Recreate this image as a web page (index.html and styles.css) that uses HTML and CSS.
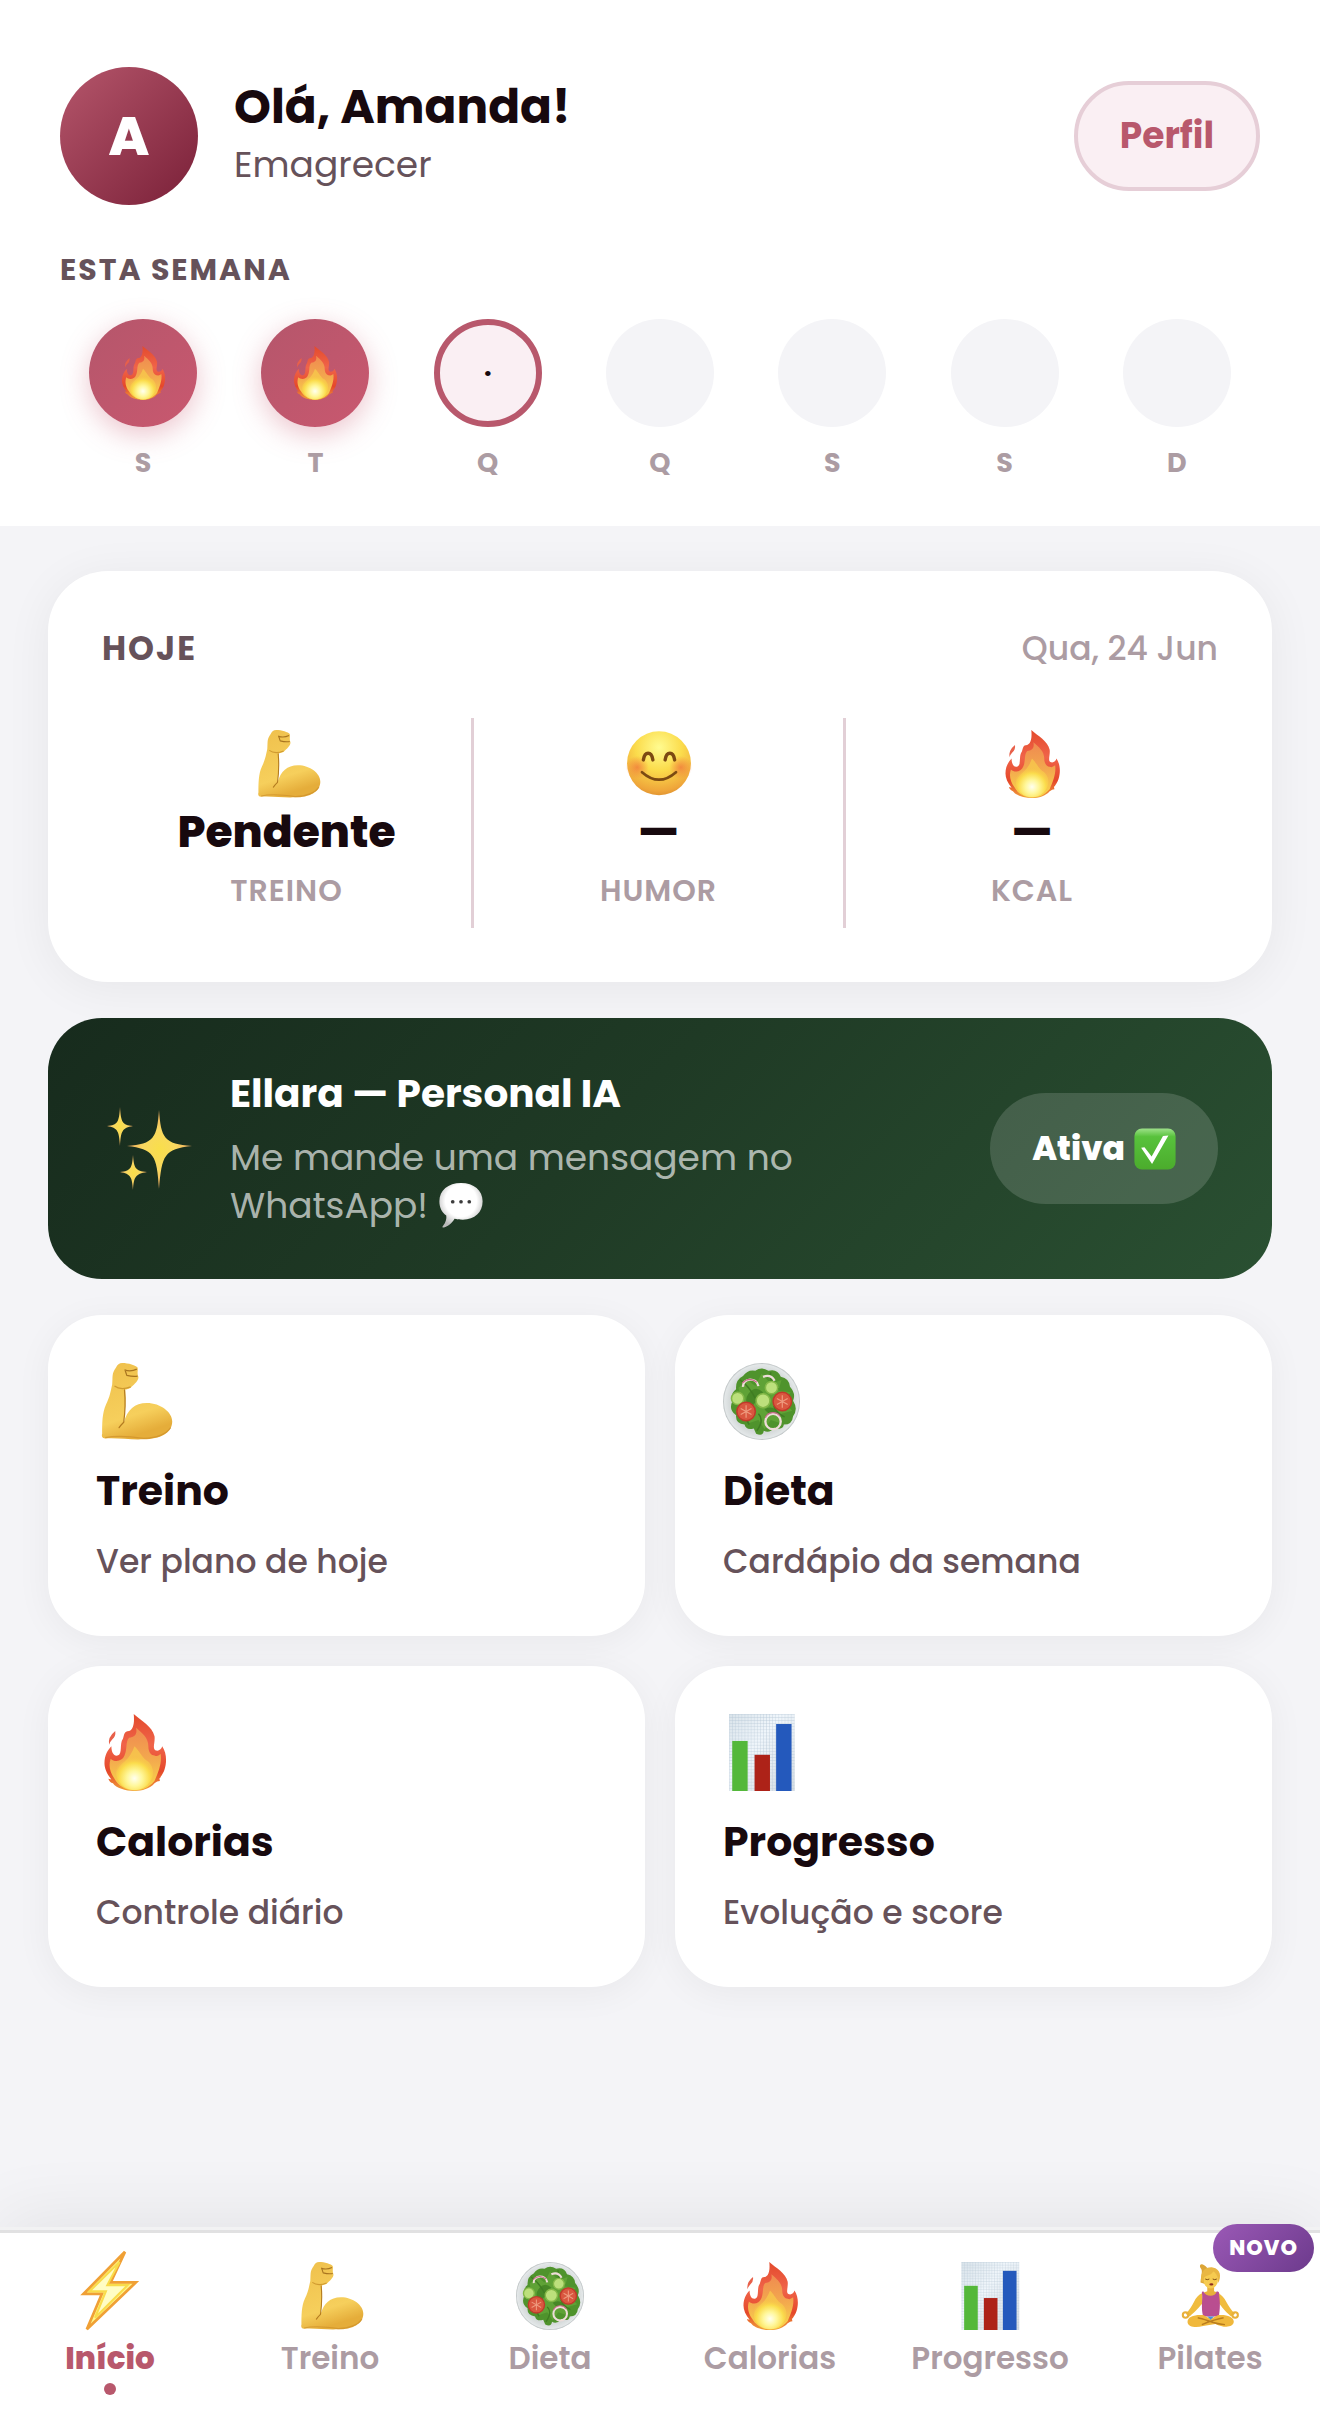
FILE: index.html
```html
<!DOCTYPE html>
<html lang="pt-BR">
<head>
    <meta charset="UTF-8">
    <meta name="viewport" content="width=device-width, initial-scale=1.0">
    <title>Início</title>
    <link rel="stylesheet" href="styles.css">
</head>
<body>
    <!-- Ícones -->
    <svg class="sprite" width="0" height="0" aria-hidden="true">
        <defs>
            <linearGradient id="g-arm" x1="0" y1="0" x2="0.3" y2="1">
                <stop offset="0" stop-color="#efc04c"/>
                <stop offset="0.75" stop-color="#f6cf5c"/>
                <stop offset="1" stop-color="#e5ad3a"/>
            </linearGradient>
            <linearGradient id="g-flame" x1="0" y1="0" x2="0" y2="1">
                <stop offset="0" stop-color="#e34a2c"/>
                <stop offset="0.4" stop-color="#f0644a"/>
                <stop offset="0.75" stop-color="#e5482a"/>
                <stop offset="1" stop-color="#f0a03a"/>
            </linearGradient>
            <linearGradient id="g-flame-mid" x1="0" y1="0" x2="0" y2="1">
                <stop offset="0" stop-color="#ef8a50"/>
                <stop offset="0.5" stop-color="#f3a84e"/>
                <stop offset="1" stop-color="#f9d84a"/>
            </linearGradient>
            <radialGradient id="g-flame-core" cx="0.5" cy="0.68" r="0.6">
                <stop offset="0" stop-color="#fffff0"/>
                <stop offset="0.35" stop-color="#fff79a"/>
                <stop offset="0.7" stop-color="#fbdc4c"/>
                <stop offset="1" stop-color="#f6bd4a" stop-opacity="0"/>
            </radialGradient>
            <radialGradient id="g-face" cx="0.5" cy="0.25" r="0.8">
                <stop offset="0" stop-color="#fffb90"/>
                <stop offset="0.45" stop-color="#fbdc4c"/>
                <stop offset="0.85" stop-color="#efa63a"/>
                <stop offset="1" stop-color="#d98a2c"/>
            </radialGradient>
            <radialGradient id="g-blush">
                <stop offset="0" stop-color="#f0703a" stop-opacity="0.7"/>
                <stop offset="1" stop-color="#f0703a" stop-opacity="0"/>
            </radialGradient>
            <radialGradient id="g-star">
                <stop offset="0" stop-color="#f9df4a"/>
                <stop offset="0.5" stop-color="#f8d860"/>
                <stop offset="1" stop-color="#f0a860"/>
            </radialGradient>
            <radialGradient id="g-bubble" cx="0.5" cy="0.4" r="0.6">
                <stop offset="0.6" stop-color="#ffffff"/>
                <stop offset="1" stop-color="#b9b9b9"/>
            </radialGradient>
            <linearGradient id="g-check" x1="0" y1="0" x2="0" y2="1">
                <stop offset="0" stop-color="#9ee28a"/>
                <stop offset="0.2" stop-color="#58c23c"/>
                <stop offset="1" stop-color="#4bac2c"/>
            </linearGradient>
            <radialGradient id="g-plate">
                <stop offset="0.8" stop-color="#d3d8d8"/>
                <stop offset="0.96" stop-color="#e3e7e8"/>
                <stop offset="1" stop-color="#b4babb"/>
            </radialGradient>
            <linearGradient id="g-paper" x1="0" y1="0" x2="1" y2="1">
                <stop offset="0" stop-color="#d9e3ea"/>
                <stop offset="0.4" stop-color="#f0f6fb"/>
                <stop offset="1" stop-color="#d2dbe2"/>
            </linearGradient>
            <pattern id="p-grid" width="4" height="4" patternUnits="userSpaceOnUse">
                <path d="M0 0H4M0 0V4" stroke="#b4c6d4" stroke-width="0.8" fill="none"/>
            </pattern>

            <symbol id="i-arm" viewBox="0 0 100 100">
                <path d="M34 0C42 0 52 3 54 6C55 10 53 12 55 18C56 22 50 28 45 32C42 34 38 34 38 35C39 48 38 62 36 77C41 61 50 52 66 52C84 52 99 64 99 76C99 91 83 99 62 99C45 100 30 97 12 98C8 98 7 95 8 92C8 78 8 65 13 54C18 44 19 37 21 28C22 18 20 14 26 6C28 2 30 0 34 0Z" fill="url(#g-arm)"/>
                <path d="M37 35Q39 55 36 77Q32 81 30 84" fill="none" stroke="#b47c20" stroke-width="1.6" stroke-linecap="round"/>
                <path d="M24 30Q32 36 45 31" fill="none" stroke="#d09a30" stroke-width="1.6"/>
                <path d="M37 9Q45 12 53 8M38 10L40 16Q48 18 54 17" fill="none" stroke="#a8741f" stroke-width="1.6"/>
                <path d="M12 97Q30 93 62 98Q88 97 97 84" fill="none" stroke="#c98a26" stroke-width="1.6" opacity="0.6"/>
            </symbol>

            <symbol id="i-flame" viewBox="0 0 100 100">
                <path d="M49 0C59 9 73 16 76 29C77 37 73 44 77 47C81 49 85 46 86 42C92 51 92 63 89 72C87 78 84 81 84 82C81 84 83 85 83 87C80 87 79 88 76 90C70 97 60 100 50 100C38 100 26 96 22 90C19 89 17 87 16 84L20 85C14 78 11 70 11 64C11 54 15 47 20 42C20 50 23 55 28 54C35 52 30 38 35 32C37 27 36 22 43 22C49 20 50 10 49 0Z" fill="url(#g-flame)"/>
                <path d="M25 22Q26 29 21 33Q18 36 17 40Q15 30 25 22Z" fill="#e8604a"/>
                <path d="M52 18C60 25 68 31 68 42C68 50 72 54 76 54C80 56 82 53 84 52C86 64 80 78 76 87C68 96 60 99 50 99C38 99 29 93 24 84C18 76 16 67 19 58C24 63 34 62 37 54C41 46 38 36 43 31C50 30 54 27 52 18Z" fill="url(#g-flame-mid)"/>
                <path d="M50 42C58 50 60 58 68 62C76 70 76 82 70 89C64 97 57 99 50 99C40 99 32 94 28 86C23 76 30 68 37 62C43 57 47 50 50 42Z" fill="#f8cd4c" opacity="0.7"/>
                <ellipse cx="50" cy="75" rx="24" ry="24" fill="url(#g-flame-core)"/>
            </symbol>

            <symbol id="i-smile" viewBox="0 0 100 100">
                <circle cx="50" cy="49" r="47" fill="url(#g-face)"/>
                <circle cx="18" cy="55" r="17" fill="url(#g-blush)"/>
                <circle cx="82" cy="55" r="17" fill="url(#g-blush)"/>
                <path d="M27 44C29 31 39 31 41 44M59 44C61 31 71 31 73 44" fill="none" stroke="#7c4a12" stroke-width="5" stroke-linecap="round"/>
                <path d="M25 62Q50 84 75 62" fill="none" stroke="#7c4a12" stroke-width="4" stroke-linecap="round"/>
            </symbol>

            <symbol id="i-sparkles" viewBox="0 0 92 92">
                <path d="M57 7C59 35 62 41 90 43C62 46 60 52 57 86C55 52 52 46 25 43C52 41 55 35 57 7Z" fill="url(#g-star)"/>
                <path d="M18 4C19 19 20 22 31 23C20 25 19 28 18 43C17 28 16 25 5 23C16 22 17 19 18 4Z" fill="url(#g-star)"/>
                <path d="M31 52C32 65 33 68 45 69C33 71 32 74 31 87C30 74 29 71 18 69C29 68 30 65 31 52Z" fill="url(#g-star)"/>
            </symbol>

            <symbol id="i-bubble" viewBox="0 0 100 100">
                <path d="M50 2C78 2 97 18 97 42C97 66 80 82 54 82C46 82 40 81 36 80C30 90 20 98 12 99C9 99 9 97 11 95C17 88 19 80 18 73C8 66 3 55 3 42C3 18 22 2 50 2Z" fill="url(#g-bubble)"/>
                <circle cx="32" cy="43" r="4" fill="#3c3c3c"/>
                <circle cx="50" cy="43" r="4" fill="#3c3c3c"/>
                <circle cx="68" cy="43" r="4" fill="#3c3c3c"/>
            </symbol>

            <symbol id="i-check" viewBox="0 0 100 100">
                <rect x="1" y="1" width="98" height="98" rx="18" fill="url(#g-check)"/>
                <path d="M17 47L25 46L42 68L69 19L82 18L43 86Z" fill="#fff"/>
            </symbol>

            <symbol id="i-salad" viewBox="0 0 100 100">
                <circle cx="50" cy="50" r="50" fill="url(#g-plate)"/>
                <path d="M17 34Q16 22 26 17Q32 8 42 10Q50 4 59 10Q71 7 75 18Q86 20 87 31Q95 40 91 49Q98 60 91 69Q90 80 79 80Q78 88 67 84Q60 92 53 88Q52 96 43 92L40 85Q30 88 28 80Q16 79 17 68Q7 61 12 50Q9 40 17 34Z" fill="#4f932c"/>
                <path d="M20 32L32 22L42 30L50 14L62 27L76 22L72 36L88 38L78 50L90 62L76 66L74 78L62 74L54 86L46 74L34 78L30 64L16 64L24 50Z" fill="#5fa236"/>
                <path d="M33 40Q42 28 52 38Q44 50 36 58Q26 50 33 40ZM54 60Q64 54 72 64Q60 70 54 60Z" fill="#468726"/>
                <path d="M22 22Q34 30 42 46M62 12Q60 26 72 34M46 66Q54 74 44 88M80 70Q70 66 66 56M18 62Q28 68 34 80" fill="none" stroke="#3f7d22" stroke-width="2"/>
                <g fill="#bce07c" stroke="#84b848" stroke-width="2">
                    <circle cx="19" cy="46" r="8"/>
                    <circle cx="63" cy="32" r="8"/>
                    <circle cx="52" cy="49" r="9"/>
                </g>
                <g fill="#d9573f" stroke="#c0392b" stroke-width="2">
                    <circle cx="30" cy="63" r="12"/>
                    <circle cx="77" cy="50" r="12"/>
                </g>
                <path d="M30 55V71M23 59L37 67M23 67L37 59M77 42V58M70 46L84 54M70 54L84 46" stroke="#ee9a7e" stroke-width="1.6"/>
                <g fill="none" stroke="#eedcd8" stroke-width="3">
                    <circle cx="65" cy="76" r="10"/>
                    <path d="M26 31C25 19 44 18 46 30M52 18Q62 14 67 23"/>
                </g>
                <path d="M55 71A11 11 0 0 1 74 69M25 26Q34 17 44 25" fill="none" stroke="#c86a8a" stroke-width="1.5"/>
            </symbol>

            <symbol id="i-chart" viewBox="0 0 100 100">
                <rect x="8" width="85" height="100" fill="url(#g-paper)"/>
                <rect x="8" width="85" height="100" fill="url(#p-grid)"/>
                <rect x="12" y="35" width="20" height="65" fill="#54b83a"/>
                <rect x="41" y="53" width="20" height="47" fill="#ad2218"/>
                <rect x="69" y="13" width="20" height="87" fill="#2459bc"/>
            </symbol>

            <symbol id="i-bolt" viewBox="0 0 100 100" overflow="visible">
                <path d="M72 -15L51 30H88L16 99L38 47H11Z" fill="#fff688" stroke="#f0a035" stroke-width="4"/>
                <path d="M64 0L46 34H76L28 82L44 43H20Z" fill="#fffdc4" stroke="#f9dc4a" stroke-width="3"/>
            </symbol>

            <symbol id="i-yoga" viewBox="0 0 100 100">
                <path d="M46 9C39 0 33 3 36 9C40 12 37 20 36 30L45 33Z" fill="#dca536"/>
                <path d="M38 46C27 50 26 66 14 76L20 80C30 72 34 66 40 60ZM62 46C73 50 75 66 87 76L81 80C71 72 68 66 62 60Z" fill="#f0bc3e"/>
                <path d="M46 35H56V43L64 46L60 56H42L38 46L46 43Z" fill="#e8b03a"/>
                <path d="M40 43C44 52 58 52 60 43L63 44C64 56 66 62 63 80H40C36 66 40 56 38 44Z" fill="#b94e90"/>
                <ellipse cx="51" cy="25" rx="11" ry="14" fill="#f6cb50"/>
                <path d="M37 28C36 12 44 7 54 8C66 10 67 22 62 31C62 23 60 17 55 14C51 20 44 20 41 23L40 30Z" fill="#e9b743"/>
                <path d="M43 25Q46 27 49 25M54 25Q57 27 60 25" fill="none" stroke="#7c4a12" stroke-width="1.4"/>
                <ellipse cx="52" cy="33" rx="3" ry="1.6" fill="#8f2c22"/>
                <path d="M40 78C28 77 16 80 17 89C18 96 30 97 40 94L58 91C70 97 84 97 85 88C85 80 74 77 62 78L51 84Z" fill="#f0b83c"/>
                <path d="M46 80H56L51 85Z" fill="#4a90d8"/>
                <path d="M32 82C44 84 58 92 72 92M70 82C58 84 48 88 38 92" fill="none" stroke="#b97c1e" stroke-width="2"/>
                <circle cx="14" cy="78" r="4" fill="none" stroke="#e8b03a" stroke-width="3"/>
                <circle cx="87" cy="78" r="4" fill="none" stroke="#e8b03a" stroke-width="3"/>
            </symbol>
        </defs>
    </svg>

    <header class="topo">
        <div class="perfil">
            <div class="avatar">A</div>
            <div class="saudacao">
                <h1>Olá, Amanda!</h1>
                <p>Emagrecer</p>
            </div>
            <button type="button" class="btn-perfil">Perfil</button>
        </div>

        <h2 class="semana-titulo">Esta semana</h2>
        <div class="semana">
            <div class="dia">
                <div class="bola feito"><svg class="icone"><use href="#i-flame"/></svg></div>
                <span>S</span>
            </div>
            <div class="dia">
                <div class="bola feito"><svg class="icone"><use href="#i-flame"/></svg></div>
                <span>T</span>
            </div>
            <div class="dia">
                <div class="bola hoje">·</div>
                <span>Q</span>
            </div>
            <div class="dia"><div class="bola"></div><span>Q</span></div>
            <div class="dia"><div class="bola"></div><span>S</span></div>
            <div class="dia"><div class="bola"></div><span>S</span></div>
            <div class="dia"><div class="bola"></div><span>D</span></div>
        </div>
    </header>

    <main>
        <section class="card-hoje">
            <div class="hoje-topo">
                <h2>Hoje</h2>
                <span class="data">Qua, 24 Jun</span>
            </div>
            <div class="stats">
                <div class="stat">
                    <svg class="icone"><use href="#i-arm"/></svg>
                    <strong>Pendente</strong>
                    <span>Treino</span>
                </div>
                <div class="stat">
                    <svg class="icone"><use href="#i-smile"/></svg>
                    <strong>—</strong>
                    <span>Humor</span>
                </div>
                <div class="stat">
                    <svg class="icone"><use href="#i-flame"/></svg>
                    <strong>—</strong>
                    <span>Kcal</span>
                </div>
            </div>
        </section>

        <section class="ellara">
            <svg class="icone brilho"><use href="#i-sparkles"/></svg>
            <div class="ellara-texto">
                <h2>Ellara — Personal IA</h2>
                <p>Me mande uma mensagem no <span class="junto">WhatsApp! <svg class="icone balao"><use href="#i-bubble"/></svg></span></p>
            </div>
            <span class="status">Ativa <svg class="icone"><use href="#i-check"/></svg></span>
        </section>

        <section class="atalhos">
            <a href="#treino" class="atalho">
                <svg class="icone"><use href="#i-arm"/></svg>
                <h3>Treino</h3>
                <p>Ver plano de hoje</p>
            </a>
            <a href="#dieta" class="atalho">
                <svg class="icone"><use href="#i-salad"/></svg>
                <h3>Dieta</h3>
                <p>Cardápio da semana</p>
            </a>
            <a href="#calorias" class="atalho">
                <svg class="icone"><use href="#i-flame"/></svg>
                <h3>Calorias</h3>
                <p>Controle diário</p>
            </a>
            <a href="#progresso" class="atalho">
                <svg class="icone"><use href="#i-chart"/></svg>
                <h3>Progresso</h3>
                <p>Evolução e score</p>
            </a>
        </section>
    </main>

    <nav class="menu">
        <a href="#inicio" class="ativo"><svg class="icone"><use href="#i-bolt"/></svg>Início</a>
        <a href="#treino"><svg class="icone"><use href="#i-arm"/></svg>Treino</a>
        <a href="#dieta"><svg class="icone"><use href="#i-salad"/></svg>Dieta</a>
        <a href="#calorias"><svg class="icone"><use href="#i-flame"/></svg>Calorias</a>
        <a href="#progresso"><svg class="icone"><use href="#i-chart"/></svg>Progresso</a>
        <a href="#pilates"><svg class="icone"><use href="#i-yoga"/></svg>Pilates<span class="novo">Novo</span></a>
    </nav>
</body>
</html>
```

FILE: styles.css
```css
* {
    box-sizing: border-box;
    margin: 0;
    padding: 0;
}

body {
    font-family: Poppins, Inter, "Open Sans", sans-serif;
    background-color: #f4f4f7;
    color: #17090e;
    min-height: 100vh;
    display: flex;
    flex-direction: column;
}

a {
    color: inherit;
    text-decoration: none;
}

.sprite {
    position: absolute;
}

.icone {
    display: block;
    width: 68px;
    height: 68px;
    overflow: visible;
}

/* Topo */
.topo {
    background-color: #fff;
    padding: 67px 60px 43px;
}

.perfil {
    display: flex;
    align-items: center;
    gap: 36px;
}

.avatar {
    width: 138px;
    height: 138px;
    border-radius: 50%;
    background: linear-gradient(135deg, #b5566b, #7a2038);
    color: #fff;
    font-size: 54px;
    font-weight: 800;
    display: flex;
    align-items: center;
    justify-content: center;
}

.saudacao {
    flex: 1;
}

.saudacao h1 {
    font-size: 47px;
    line-height: 58px;
    font-weight: 700;
}

.saudacao p {
    font-size: 36px;
    line-height: 58px;
    color: #66525a;
}

.btn-perfil {
    font-family: inherit;
    font-size: 36px;
    font-weight: 700;
    line-height: 54px;
    color: #b8586c;
    background-color: #faeff3;
    border: 4px solid #e6ced7;
    border-radius: 60px;
    padding: 24px 42px;
    cursor: pointer;
}

.semana-titulo {
    margin: 43px 0 27px;
    font-size: 30px;
    line-height: 44px;
    font-weight: 700;
    letter-spacing: 2px;
    text-transform: uppercase;
    color: #66525a;
}

.semana {
    display: grid;
    grid-template-columns: repeat(7, 1fr);
    column-gap: 6px;
}

.dia {
    display: flex;
    flex-direction: column;
    align-items: center;
    gap: 16px;
    font-size: 27px;
    line-height: 40px;
    font-weight: 700;
    color: #ac9ca3;
}

.bola {
    width: 108px;
    height: 108px;
    border-radius: 50%;
    background-color: #f4f4f7;
    display: flex;
    align-items: center;
    justify-content: center;
}

.bola .icone {
    width: 54px;
    height: 54px;
}

.bola.feito {
    background: linear-gradient(135deg, #b5566b, #c9586f);
    box-shadow: 0 8px 28px rgba(201, 88, 111, 0.35);
}

.bola.hoje {
    background-color: #faeff3;
    border: 6px solid #b8586c;
    color: #17090e;
}

/* Conteudo */
main {
    flex: 1;
    padding: 45px 48px;
    display: flex;
    flex-direction: column;
    gap: 36px;
}

.card-hoje {
    background-color: #fff;
    border-radius: 60px;
    padding: 54px;
    box-shadow: 0 6px 48px rgba(0, 0, 0, 0.06);
}

.hoje-topo {
    display: flex;
    justify-content: space-between;
    margin-bottom: 45px;
    font-size: 33px;
    line-height: 48px;
}

.hoje-topo h2 {
    font-size: 33px;
    font-weight: 700;
    letter-spacing: 2px;
    text-transform: uppercase;
    color: #66525a;
}

.data {
    font-weight: 500;
    color: #ac9ca3;
}

.stats {
    display: grid;
    grid-template-columns: repeat(3, 1fr);
}

.stat {
    display: flex;
    flex-direction: column;
    align-items: center;
    padding: 12px 0 15px;
    border-right: 3px solid #e2cfd6;
}

.stat:last-child {
    border-right: none;
}

.stat strong {
    margin: 8px 0 11px;
    font-size: 44px;
    line-height: 52px;
    font-weight: 800;
}

.stat span {
    font-size: 30px;
    line-height: 44px;
    font-weight: 600;
    letter-spacing: 1px;
    text-transform: uppercase;
    color: #ac9ca3;
}

.ellara {
    display: flex;
    align-items: center;
    gap: 36px;
    padding: 49px 54px;
    border-radius: 54px;
    background: linear-gradient(135deg, #172b1d, #1f3a25 45%, #2a5032);
    color: #fff;
}

.ellara .brilho {
    width: 92px;
    height: 92px;
}

.ellara-texto {
    flex: 1;
}

.ellara h2 {
    margin-bottom: 13px;
    font-size: 39px;
    line-height: 54px;
    font-weight: 700;
}

.ellara p {
    font-size: 36px;
    line-height: 48px;
    color: rgba(255, 255, 255, 0.65);
}

.junto {
    white-space: nowrap;
}

.ellara .balao {
    display: inline-block;
    width: 46px;
    height: 46px;
    vertical-align: -10px;
}

.status {
    display: flex;
    align-items: center;
    gap: 9px;
    padding: 30px 42px;
    border-radius: 60px;
    background-color: rgba(255, 255, 255, 0.15);
    font-size: 33px;
    line-height: 51px;
    font-weight: 800;
}

.status .icone {
    width: 42px;
    height: 42px;
}

.atalhos {
    display: grid;
    grid-template-columns: 1fr 1fr;
    gap: 30px;
}

.atalho {
    background-color: #fff;
    border-radius: 54px;
    padding: 48px;
    box-shadow: 0 6px 36px rgba(0, 0, 0, 0.05);
}

.atalho .icone {
    width: 77px;
    height: 77px;
}

.atalho h3 {
    margin: 24px 0 18px;
    font-size: 41px;
    line-height: 54px;
    font-weight: 700;
}

.atalho p {
    font-size: 33px;
    line-height: 52px;
    font-weight: 500;
    color: #66525a;
}

/* Menu inferior */
.menu {
    position: sticky;
    bottom: 0;
    display: grid;
    grid-template-columns: repeat(6, 1fr);
    background-color: #fff;
    border-top: 3px solid #e1e1e2;
    box-shadow: 0 -3px 0 #f2f2f3, 0 -12px 72px rgba(0, 0, 0, 0.07);
}

.menu a {
    position: relative;
    display: flex;
    flex-direction: column;
    align-items: center;
    padding: 29px 0 46px;
    font-size: 31px;
    line-height: 36px;
    font-weight: 600;
    color: #ac9ca3;
}

.menu .icone {
    margin-bottom: 10px;
}

.menu .ativo {
    color: #b8586c;
    font-weight: 800;
}

.menu .ativo::after {
    content: "";
    position: absolute;
    bottom: 27px;
    width: 12px;
    height: 12px;
    border-radius: 50%;
    background-color: #b8586c;
}

.novo {
    position: absolute;
    top: -9px;
    right: 6px;
    padding: 0 16px;
    border-radius: 24px;
    background: linear-gradient(135deg, #9b59b6, #6c3a8c);
    color: #fff;
    font-size: 21px;
    line-height: 48px;
    font-weight: 800;
    letter-spacing: 1px;
    text-transform: uppercase;
}
```
